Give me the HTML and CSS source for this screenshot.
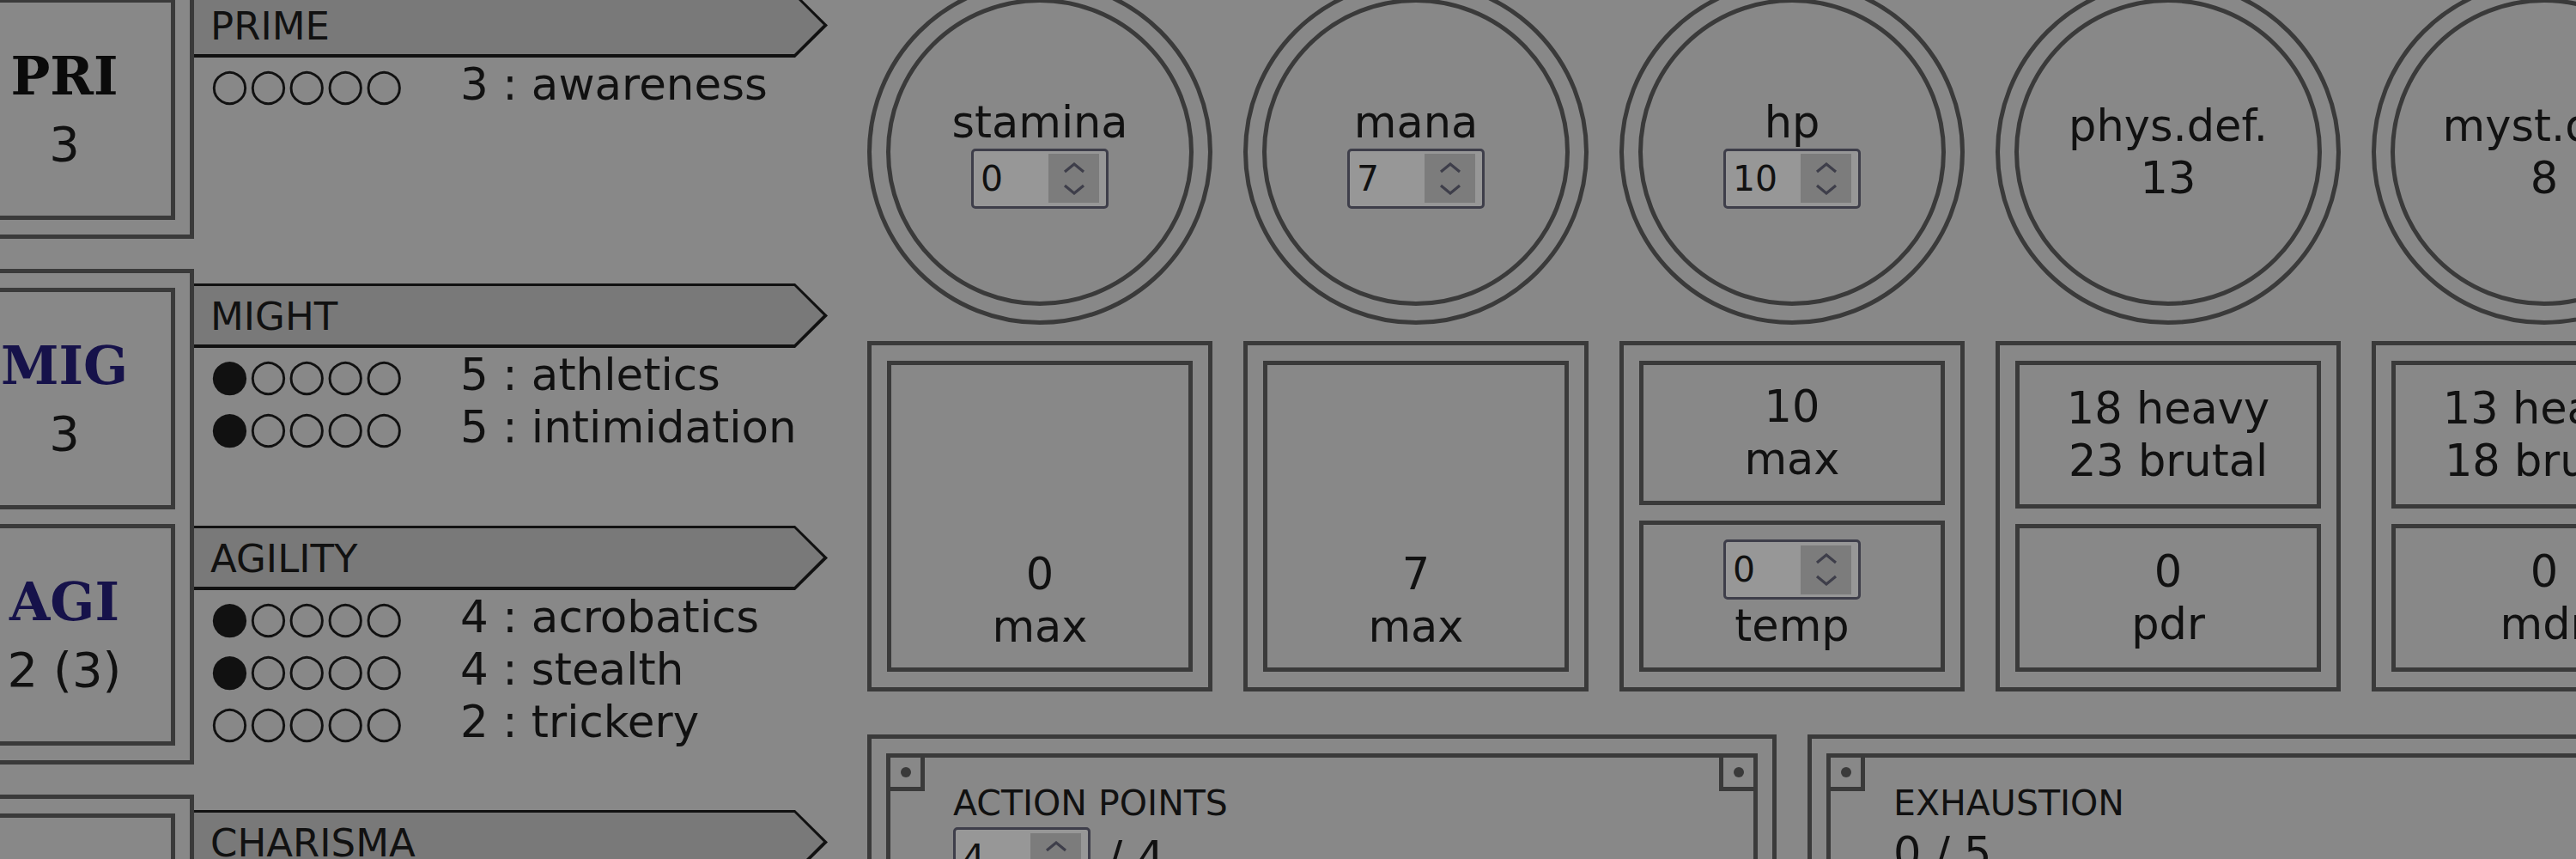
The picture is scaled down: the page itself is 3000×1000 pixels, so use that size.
FILE: index.html
```html
<!DOCTYPE html>
<html>
<head>
<meta charset="utf-8">
<title>Character sheet</title>
<link rel="stylesheet" href="styles.css">
</head>
<body>
<div class="sheet">
  <div class="abilities">
    <div class="group">
      <div class="ability"><div class="ab-name">PRI</div><div class="ab-val">3</div></div>
    </div>
    <div class="group">
      <div class="ability"><div class="ab-name navy">MIG</div><div class="ab-val">3</div></div>
      <div class="ability"><div class="ab-name navy">AGI</div><div class="ab-val">2 (3)</div></div>
    </div>
    <div class="group">
      <div class="ability"></div>
    </div>
  </div>

  <div class="skills">
    <section class="skillset prime">
      <div class="hdr"><div class="hdr-in">PRIME</div></div>
      <div class="skill"><span class="dots">○○○○○</span><span>3 : awareness</span></div>
    </section>
    <section class="skillset might">
      <div class="hdr"><div class="hdr-in">MIGHT</div></div>
      <div class="skill"><span class="dots">●○○○○</span><span>5 : athletics</span></div>
      <div class="skill"><span class="dots">●○○○○</span><span>5 : intimidation</span></div>
    </section>
    <section class="skillset agility">
      <div class="hdr"><div class="hdr-in">AGILITY</div></div>
      <div class="skill"><span class="dots">●○○○○</span><span>4 : acrobatics</span></div>
      <div class="skill"><span class="dots">●○○○○</span><span>4 : stealth</span></div>
      <div class="skill"><span class="dots">○○○○○</span><span>2 : trickery</span></div>
    </section>
    <section class="skillset">
      <div class="hdr"><div class="hdr-in">CHARISMA</div></div>
    </section>
  </div>

  <div class="stats">
    <div class="grid5">
      <div class="ring"><div class="ring-in">
        <div class="line">stamina</div>
        <div class="num"><input class="num-field" type="text" value="0" readonly><span class="spin"><svg class="chev" viewBox="0 0 26 13"><polyline points="2,11 13,2 24,11"/></svg><svg class="chev" viewBox="0 0 26 13"><polyline points="2,2 13,11 24,2"/></svg></span></div>
      </div></div>
      <div class="ring"><div class="ring-in">
        <div class="line">mana</div>
        <div class="num"><input class="num-field" type="text" value="7" readonly><span class="spin"><svg class="chev" viewBox="0 0 26 13"><polyline points="2,11 13,2 24,11"/></svg><svg class="chev" viewBox="0 0 26 13"><polyline points="2,2 13,11 24,2"/></svg></span></div>
      </div></div>
      <div class="ring"><div class="ring-in">
        <div class="line">hp</div>
        <div class="num"><input class="num-field" type="text" value="10" readonly><span class="spin"><svg class="chev" viewBox="0 0 26 13"><polyline points="2,11 13,2 24,11"/></svg><svg class="chev" viewBox="0 0 26 13"><polyline points="2,2 13,11 24,2"/></svg></span></div>
      </div></div>
      <div class="ring"><div class="ring-in">
        <div class="line">phys.def.</div>
        <div class="line">13</div>
      </div></div>
      <div class="ring"><div class="ring-in">
        <div class="line">myst.def.</div>
        <div class="line">8</div>
      </div></div>

      <div class="sbox">
        <div class="cell cell-bottom"><div class="line">0</div><div class="line">max</div></div>
      </div>
      <div class="sbox">
        <div class="cell cell-bottom"><div class="line">7</div><div class="line">max</div></div>
      </div>
      <div class="sbox">
        <div class="cell"><div class="line">10</div><div class="line">max</div></div>
        <div class="cell">
          <div class="num"><input class="num-field" type="text" value="0" readonly><span class="spin"><svg class="chev" viewBox="0 0 26 13"><polyline points="2,11 13,2 24,11"/></svg><svg class="chev" viewBox="0 0 26 13"><polyline points="2,2 13,11 24,2"/></svg></span></div>
          <div class="line">temp</div>
        </div>
      </div>
      <div class="sbox">
        <div class="cell"><div class="line">18 heavy</div><div class="line">23 brutal</div></div>
        <div class="cell"><div class="line">0</div><div class="line">pdr</div></div>
      </div>
      <div class="sbox">
        <div class="cell"><div class="line">13 heavy</div><div class="line">18 brutal</div></div>
        <div class="cell"><div class="line">0</div><div class="line">mdr</div></div>
      </div>
    </div>

    <div class="grid2">
      <div class="panel"><div class="panel-in">
        <div class="marker"><span class="pin"></span></div>
        <div class="panel-body">
          <div class="panel-title">ACTION POINTS</div>
          <div class="ap-row">
            <div class="num"><input class="num-field" type="text" value="4" readonly><span class="spin"><svg class="chev" viewBox="0 0 26 13"><polyline points="2,11 13,2 24,11"/></svg><svg class="chev" viewBox="0 0 26 13"><polyline points="2,2 13,11 24,2"/></svg></span></div>
            <span class="line">/ 4</span>
          </div>
        </div>
        <div class="marker marker-right"><span class="pin"></span></div>
      </div></div>
      <div class="panel"><div class="panel-in">
        <div class="marker"><span class="pin"></span></div>
        <div class="panel-body">
          <div class="panel-title">EXHAUSTION</div>
          <div class="line">0 / 5</div>
        </div>
        <div class="marker marker-right"><span class="pin"></span></div>
      </div></div>
    </div>
  </div>
</div>
</body>
</html>
```

FILE: styles.css
```css
html, body {
  margin: 0;
  padding: 0;
}
body {
  background: #888888;
  overflow: hidden;
  width: 3000px;
  height: 1000px;
  font-family: "DejaVu Sans", "Liberation Sans", sans-serif;
  color: #111111;
}

.sheet {
  display: flex;
  align-items: flex-start;
  margin: -24px 0 0 -76px;
}

/* ---------- abilities ---------- */
.abilities {
  flex: none;
  display: flex;
  flex-direction: column;
  gap: 35px;
}
.group {
  border: 5px solid #3a3a3a;
  padding: 17px;
  display: flex;
  flex-direction: column;
  gap: 17px;
}
.ability {
  width: 258px;
  height: 258px;
  box-sizing: border-box;
  border: 5px solid #3a3a3a;
  display: flex;
  flex-direction: column;
  align-items: center;
  justify-content: center;
}
.ab-name {
  font-family: "DejaVu Serif", "Liberation Serif", serif;
  font-weight: bold;
  font-size: 61px;
  line-height: 72px;
  margin-bottom: 9px;
  color: #0a0a0a;
}
.ab-name.navy {
  color: #16124a;
}
.ab-val {
  font-size: 56px;
  line-height: 67px;
}

/* ---------- skills ---------- */
.skills {
  flex: none;
  width: 738px;
  margin-top: 16px;
}
.skillset.prime { height: 338px; }
.skillset.might { height: 282px; }
.skillset.agility { height: 331px; }

.hdr {
  width: 738px;
  height: 75px;
  box-sizing: border-box;
  padding: 3px 0 4px;
  background: #111111;
  clip-path: polygon(0 0, 700px 0, 738px 37.5px, 700px 75px, 0 75px);
}
.hdr-in {
  height: 68px;
  box-sizing: border-box;
  background: #797979;
  clip-path: polygon(0 0, 699px 0, 733px 34px, 699px 68px, 0 68px);
  display: flex;
  align-items: center;
  padding: 2px 0 0 19px;
  font-size: 45px;
}
.skill {
  height: 61px;
  line-height: 63px;
  font-size: 51.5px;
  padding-left: 19px;
  white-space: nowrap;
}
.dots {
  display: inline-block;
  width: 291px;
}

/* ---------- stats ---------- */
.stats {
  flex: none;
  margin-left: 46px;
}
.grid5 {
  display: grid;
  grid-template-columns: repeat(5, 402px);
  column-gap: 36px;
  row-gap: 19px;
}
.ring {
  width: 402px;
  height: 402px;
  box-sizing: border-box;
  border: 5px solid #3a3a3a;
  border-radius: 50%;
  padding: 17px;
}
.ring-in {
  width: 100%;
  height: 100%;
  box-sizing: border-box;
  border: 5px solid #3a3a3a;
  border-radius: 50%;
  display: flex;
  flex-direction: column;
  align-items: center;
  justify-content: center;
}
.line {
  font-size: 51px;
  line-height: 61px;
  white-space: nowrap;
}

.num {
  width: 160px;
  height: 70px;
  box-sizing: border-box;
  border: 3px solid #3e3e4a;
  border-radius: 5px;
  background: #979797;
  display: flex;
  align-items: center;
  padding-left: 8px;
}
.num-field {
  flex: 1;
  width: 0;
  min-width: 0;
  border: 0;
  padding: 0;
  margin: 0;
  background: transparent;
  font-family: "DejaVu Sans", sans-serif;
  font-size: 41px;
  color: #111111;
  outline: none;
}
.spin {
  width: 59px;
  height: 57px;
  margin-right: 8px;
  background: #7c7c7c;
  display: flex;
  flex-direction: column;
  align-items: center;
  justify-content: center;
  gap: 12px;
}
.chev {
  width: 26px;
  height: 13px;
  display: block;
}
.chev polyline {
  fill: none;
  stroke: #3e3e4a;
  stroke-width: 3.2;
}

.sbox {
  height: 408px;
  box-sizing: border-box;
  border: 5px solid #3a3a3a;
  padding: 18px;
  display: flex;
  flex-direction: column;
  gap: 18px;
}
.cell {
  flex: 1 1 auto;
  border: 5px solid #3a3a3a;
  display: flex;
  flex-direction: column;
  align-items: center;
  justify-content: center;
}
.cell-bottom {
  justify-content: flex-end;
  padding-bottom: 17px;
}

/* ---------- bottom panels ---------- */
.grid2 {
  display: grid;
  grid-template-columns: repeat(2, 1059px);
  column-gap: 36px;
  margin-top: 50px;
}
.panel {
  border: 5px solid #3a3a3a;
  padding: 17px;
  height: 320px;
}
.panel-in {
  border: 5px solid #3a3a3a;
  height: 100%;
  box-sizing: border-box;
  display: flex;
  align-items: flex-start;
}
.marker {
  flex: none;
  width: 40px;
  height: 39px;
  box-sizing: border-box;
  border-right: 5px solid #3a3a3a;
  border-bottom: 5px solid #3a3a3a;
  display: flex;
  align-items: center;
  justify-content: center;
}
.marker-right {
  border-right: 0;
  border-left: 5px solid #3a3a3a;
}
.pin {
  width: 12px;
  height: 12px;
  border-radius: 50%;
  background: #3a3a3a;
}
.panel-body {
  flex: 1;
  padding: 29px 0 0 33px;
}
.panel-title {
  font-size: 41px;
  line-height: 49px;
  margin-bottom: 3px;
}
.ap-row {
  display: flex;
  align-items: center;
  gap: 20px;
}
```
